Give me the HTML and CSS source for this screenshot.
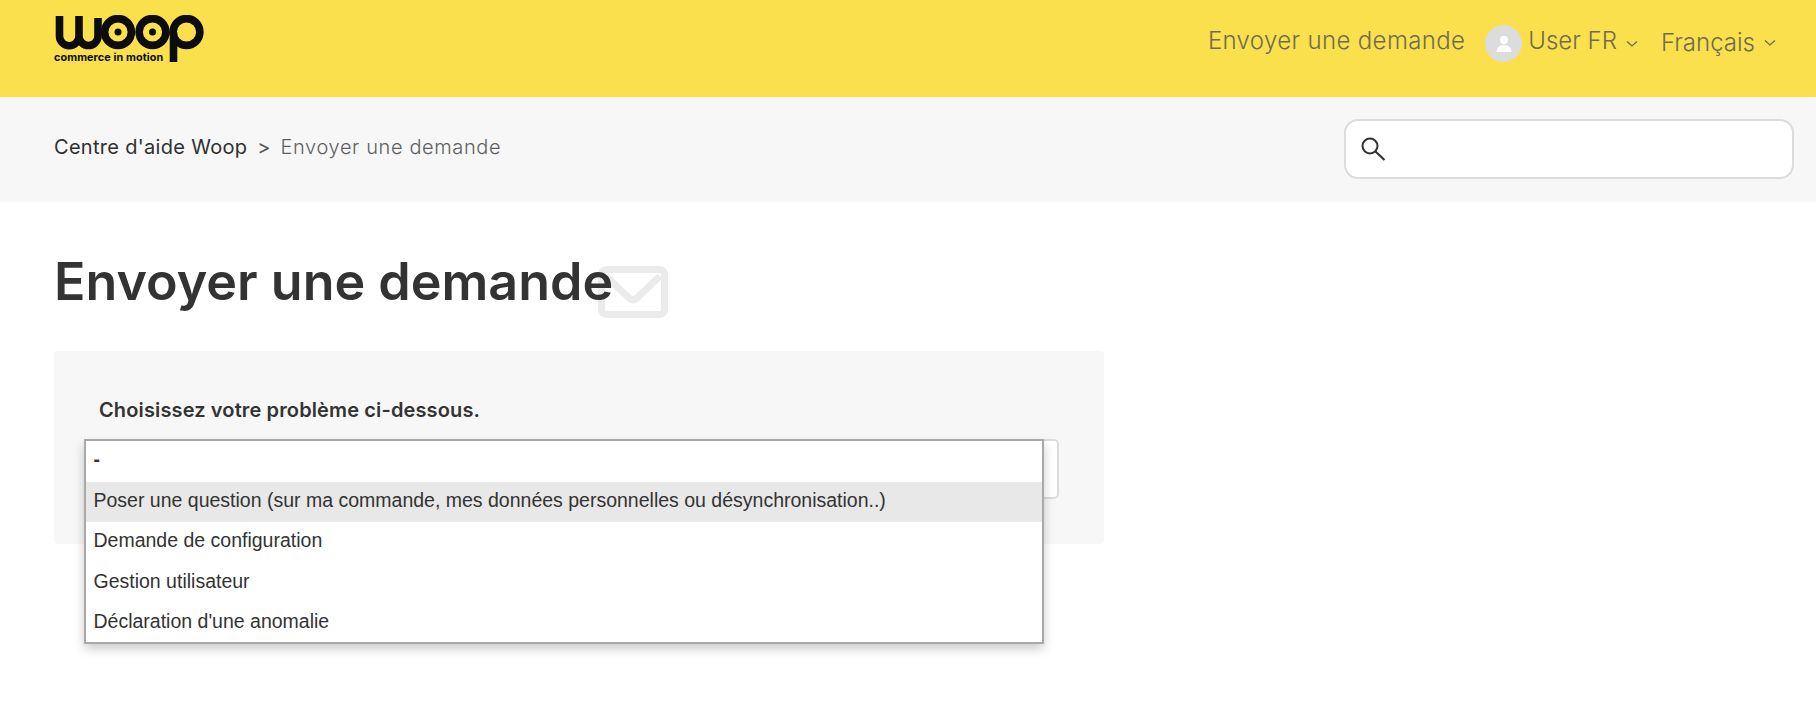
FILE: index.html
```html
<!DOCTYPE html>
<html lang="fr">
<head>
<meta charset="utf-8">
<title>Envoyer une demande</title>
<link rel="stylesheet" href="styles.css">
</head>
<body>
<header class="topbar">
  <a class="logo" href="#">
    <svg class="logo-mark" viewBox="0 0 150 47" width="150" height="47" aria-hidden="true">
      <g fill="none" stroke="#0c0c0c" stroke-width="7.600">
        <path d="M5.500 1V21a9.750 9.750 0 0 0 19.500 0V1M25 21a9.500 9.500 0 0 0 19 0V3"/>
        <circle cx="64" cy="17" r="13.400"/>
        <circle cx="98.500" cy="17" r="13.400"/>
        <circle cx="132.500" cy="17" r="13.400"/>
        <path d="M119.500 17V47"/>
      </g>
      <circle cx="64" cy="17" r="3.500" fill="#0c0c0c"/>
      <circle cx="98.500" cy="17" r="3.500" fill="#0c0c0c"/>
    </svg>
    <span class="logo-tag">commerce in motion</span>
  </a>
  <nav class="topnav">
    <a class="nav-link" href="#">Envoyer une demande</a>
    <a class="nav-user" href="#">
      <span class="avatar">
        <svg viewBox="0 0 24 24" width="24" height="24" aria-hidden="true"><circle cx="12" cy="8" r="4.200" fill="#fff"/><path d="M4.500 20c0-5 3.200-6.800 7.500-6.800s7.500 1.800 7.500 6.800z" fill="#fff"/></svg>
      </span>
      <span class="nav-name">User FR</span>
      <svg class="caret" viewBox="0 0 12 8" width="12" height="8" aria-hidden="true"><path d="M1 1.500 6 6l5-4.500" fill="none" stroke="#6f6c50" stroke-width="1.300"/></svg>
    </a>
    <a class="nav-lang" href="#">
      <span>Français</span>
      <svg class="caret" viewBox="0 0 12 8" width="12" height="8" aria-hidden="true"><path d="M1 1.500 6 6l5-4.500" fill="none" stroke="#6f6c50" stroke-width="1.300"/></svg>
    </a>
  </nav>
</header>

<div class="subbar">
  <ol class="crumbs">
    <li class="crumb-home"><a href="#">Centre d'aide Woop</a></li>
    <li class="crumb-sep">&gt;</li>
    <li class="crumb-current">Envoyer une demande</li>
  </ol>
  <div class="search">
    <svg viewBox="0 0 25 25" width="25" height="25" aria-hidden="true"><circle cx="9" cy="9" r="7.500" fill="none" stroke="#333" stroke-width="2"/><path d="m14.500 14.500 9 8.500" fill="none" stroke="#333" stroke-width="2.200"/></svg>
  </div>
</div>

<main class="content">
  <div class="title-row">
    <svg class="title-icon" viewBox="0 0 70 52" width="70" height="52" aria-hidden="true">
      <rect x="3.500" y="3.500" width="63" height="45" rx="5" fill="none" stroke="#ebebeb" stroke-width="7"/>
      <path d="M8 10 31 32q4 3.500 8 0L62 10" fill="none" stroke="#ebebeb" stroke-width="7"/>
    </svg>
    <h1 class="title">Envoyer une demande</h1>
  </div>
  <section class="panel">
    <label class="panel-label">Choisissez votre problème ci-dessous.</label>
    <div class="select-box"></div>
    <ul class="dropdown">
      <li class="opt opt-first">-</li>
      <li class="opt opt-active">Poser une question (sur ma commande, mes données personnelles ou désynchronisation..)</li>
      <li class="opt">Demande de configuration</li>
      <li class="opt">Gestion utilisateur</li>
      <li class="opt">Déclaration d'une anomalie</li>
    </ul>
  </section>
</main>
</body>
</html>
```
FILE: styles.css
```css
* { box-sizing: border-box; }
html, body { margin: 0; padding: 0; }
body { background: #fff; color: #333; font-family: Inter, "Liberation Sans", sans-serif; height: 720px; overflow: hidden; }
a { color: inherit; text-decoration: none; }

.topbar { height: 97px; background: #fbe04d; display: flex; justify-content: space-between; align-items: flex-start; padding: 15px 40px 0 54px; }
.logo { display: block; position: relative; width: 150px; height: 47px; }
.logo-mark { display: block; }
.logo-tag { position: absolute; left: 0; top: 37px; font-size: 10.800px; font-weight: 700; color: #0c0c0c; line-height: 12px; white-space: nowrap; letter-spacing: .1px; }

.topnav { display: flex; align-items: flex-start; color: #6f6c50; font-size: 24px; line-height: 30px; font-weight: 300; }
.nav-link { margin-top: 11px; letter-spacing: .35px; }
.nav-user { display: flex; align-items: center; margin-left: 20px; margin-top: 10px; }
.avatar { width: 37px; height: 37px; border-radius: 50%; background: #dcdcdc; display: flex; align-items: center; justify-content: center; }
.nav-name { margin-left: 6px; margin-top: -5px; }
.caret { margin-left: 9px; }
.nav-lang { display: flex; align-items: center; margin-left: 23px; margin-top: 13px; }

.subbar { height: 105px; background: #f7f7f7; display: flex; justify-content: space-between; align-items: flex-start; padding: 22px 22px 0 54px; }
.crumbs { display: flex; list-style: none; margin: 0; padding: 13px 0 0; font-size: 20px; line-height: 30px; color: #2f2f2f; }
.crumb-home { letter-spacing: .3px; }
.crumb-sep { margin: 0 10px; color: #555; }
.crumb-current { color: #5f5f5f; letter-spacing: .62px; font-weight: 300; }
.search { width: 450px; height: 60px; background: #fff; border: 2px solid #dcdcdc; border-radius: 14px; display: flex; align-items: center; padding-left: 15px; }

.content { padding: 46px 0 0 54px; }
.title-row { position: relative; height: 103px; }
.title { position: relative; margin: 0; padding-top: 2px; font-size: 52px; line-height: 64px; font-weight: 600; color: #333; white-space: nowrap; }
.title-icon { position: absolute; left: 544px; top: 18px; }

.panel { position: relative; width: 1050px; height: 193px; background: #f7f7f7; border-radius: 4px; padding: 44px 45px 0; }
.panel-label { display: block; font-size: 20px; line-height: 30px; font-weight: 600; color: #333; letter-spacing: .13px; }
.select-box { margin-top: 14px; width: 960px; height: 60px; background: #fff; border: 2px solid #dcdcdc; border-radius: 5px; }
.dropdown { position: absolute; left: 30px; top: 88px; width: 960px; height: 205px; margin: 0; padding: 0; list-style: none; background: #fff; border: 2px solid #a9a9a9; box-shadow: 0 5px 10px rgba(0,0,0,.2); font-family: "Liberation Sans", Arial, sans-serif; font-size: 19.500px; color: #333; }
.opt { height: 40.500px; line-height: 36px; padding-left: 7.500px; white-space: nowrap; }
.opt-first { font-weight: 700; }
.opt-active { background: #e8e8e8; }
```
